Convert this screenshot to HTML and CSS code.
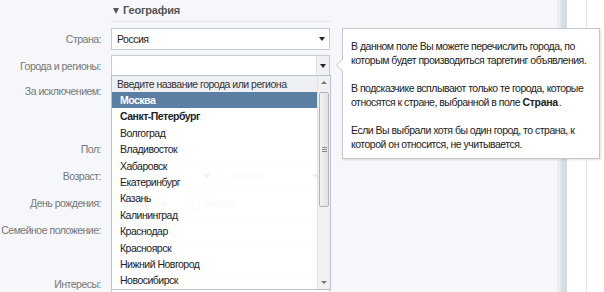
FILE: index.html
```html
<!DOCTYPE html>
<html lang="ru">
<head>
    <meta charset="UTF-8">
    <title>Таргетинг</title>
    <link rel="stylesheet" href="styles.css">
</head>
<body>
    <div class="page">
        <div class="panel">
            <div class="section-title"><span class="tri"></span>География</div>
            <div class="form">
                <div class="row row-country">
                    <label>Страна:</label>
                    <div class="select"><span>Россия</span><span class="arrow"></span></div>
                </div>
                <div class="row row-cities">
                    <label>Города и регионы:</label>
                    <div class="combo">
                        <span class="combo-btn"><span class="arrow"></span></span>
                        <div class="dropdown">
                            <div class="dd-list">
                                <div class="dd-hint">Введите название города или региона</div>
                                <div class="dd-item active">Москва</div>
                                <div class="dd-item bold">Санкт-Петербург</div>
                                <div class="dd-item">Волгоград</div>
                                <div class="dd-item">Владивосток</div>
                                <div class="dd-item">Хабаровск</div>
                                <div class="dd-item">Екатеринбург</div>
                                <div class="dd-item">Казань</div>
                                <div class="dd-item">Калининград</div>
                                <div class="dd-item">Краснодар</div>
                                <div class="dd-item">Красноярск</div>
                                <div class="dd-item">Нижний Новгород</div>
                                <div class="dd-item">Новосибирск</div>
                            </div>
                            <div class="dd-scroll">
                                <span class="sc-up"></span>
                                <span class="sc-thumb"><span class="grip"></span></span>
                                <span class="sc-down"></span>
                            </div>
                        </div>
                    </div>
                </div>
                <div class="row row-except">
                    <label>За исключением:</label>
                    <div class="input"></div>
                </div>
                <div class="row row-sex">
                    <label>Пол:</label>
                    <div class="radios"></div>
                </div>
                <div class="row row-age">
                    <label>Возраст:</label>
                    <div class="pair">
                        <div class="select small"><span></span><span class="arrow"></span></div>
                        <div class="select small"><span>– Любой</span><span class="arrow"></span></div>
                    </div>
                </div>
                <div class="row row-bday">
                    <label>День рождения:</label>
                    <div class="checks">
                        <span class="check"></span><span>Сегодня</span>
                        <span class="check"></span><span>Завтра</span>
                    </div>
                </div>
                <div class="row row-family">
                    <label>Семейное положение:</label>
                    <div class="select"><span></span><span class="arrow"></span></div>
                </div>
                <div class="row row-interests">
                    <label>Интересы:</label>
                    <div class="input"></div>
                </div>
            </div>

            <div class="tip">
                <p>В данном поле Вы можете перечислить города, по которым будет производиться таргетинг объявления.</p>
                <p>В подсказчике всплывают только те города, которые относятся к стране, выбранной в поле <b>Страна</b>.</p>
                <p>Если Вы выбрали хотя бы один город, то страна, к которой он относится, не учитывается.</p>
            </div>
        </div>
        <div class="bar"></div>
        <div class="side"></div>
    </div>
</body>
</html>
```

FILE: styles.css
```css
*{
    margin: 0;
    padding: 0;
    box-sizing: border-box;
}
body{
    width: 604px;
    height: 292px;
    overflow: hidden;
    font-family: "Liberation Sans", Arial, sans-serif;
    font-size: 10.5px;
    letter-spacing: -0.5px;
    color: #222;
    background: #fff;
}
.page{
    display: flex;
    height: 292px;
}
.panel{
    position: relative;
    width: 557px;
    background: #f6f7fa;
}
.bar{
    width: 10px;
    background: linear-gradient(to right, #e9edf2 0, #e9edf2 3px, #d5dce4 5px, #d5dce4 100%);
}
.side{
    flex: 1;
    background: #fff;
    border-right: 1px solid #e4e6e9;
    margin-right: 17px;
}

/* section header */
.section-title{
    margin-left: 111px;
    width: 220px;
    height: 22px;
    padding-left: 2px;
    border-bottom: 1px solid #e3e6ea;
    font-weight: bold;
    font-size: 11px;
    letter-spacing: -0.2px;
    color: #555;
    line-height: 21px;
    display: flex;
    align-items: center;
    gap: 4px;
}
.tri{
    width: 0;
    height: 0;
    border-left: 3.5px solid transparent;
    border-right: 3.5px solid transparent;
    border-top: 6px solid #555;
    margin-top: 1px;
}

/* form */
.form{
    padding-top: 6px;
}
.row{
    display: grid;
    grid-template-columns: 102px 219px;
    column-gap: 9px;
    align-items: center;
}
.row label{
    text-align: right;
    color: #777;
    white-space: nowrap;
    padding-right: 1px;
}
.row-country{ height: 22px; }
.row-cities{ height: 21px; margin-top: 5px; }
.row-except{ height: 22px; margin-top: 4px; }
.row-sex{ height: 18px; margin-top: 38px; }
.row-age{ height: 22px; margin-top: 7px; }
.row-bday{ height: 18px; margin-top: 7px; }
.row-family{ height: 22px; margin-top: 7px; }
.row-interests{ height: 18px; margin-top: 34px; }

.select, .input, .combo{
    height: 100%;
    background: #fff;
    border: 1px solid #c6ccd3;
    display: flex;
    align-items: center;
    justify-content: space-between;
    padding: 0 4px 0 5px;
    color: #222;
}
.arrow{
    width: 0;
    height: 0;
    border-left: 3.5px solid transparent;
    border-right: 3.5px solid transparent;
    border-top: 4px solid #222;
}
.pair{
    display: flex;
    gap: 4px;
    height: 100%;
}
.select.small{
    width: 104px;
    color: #999;
}
.checks{
    display: flex;
    align-items: center;
    gap: 5px;
    color: #999;
}
.check{
    width: 13px;
    height: 13px;
    border: 1px solid #bbb;
    background: #fff;
    margin-left: 16px;
}
.check:first-child{
    margin-left: 0;
}

/* city combobox */
.combo{
    position: relative;
    justify-content: flex-end;
    padding: 0;
}
.combo-btn{
    width: 13px;
    height: 100%;
    background: #eef0f3;
    border-left: 1px solid #dde1e6;
    display: flex;
    align-items: center;
    justify-content: center;
}
.dropdown{
    position: absolute;
    top: 19px;
    left: -1px;
    width: 220px;
    height: 215px;
    display: flex;
    border: 1px solid #b9c1ca;
    background: rgba(255, 255, 255, 0.93);
    z-index: 2;
}
.dd-list{
    flex: 1;
}
.dd-hint{
    height: 16px;
    line-height: 16px;
    padding-left: 5px;
    background: #eef0f3;
    color: #333;
    white-space: nowrap;
}
.dd-item{
    height: 16.4px;
    line-height: 16.4px;
    padding-left: 8px;
    color: #222;
}
.dd-item.bold{
    font-weight: bold;
}
.dd-item.active{
    background: #5b7ea3;
    color: #fff;
    font-weight: bold;
}
.dd-scroll{
    width: 13px;
    background: #f1f1f1;
    border-left: 1px solid #e2e2e2;
    display: flex;
    flex-direction: column;
    align-items: center;
}
.sc-up, .sc-down{
    width: 0;
    height: 0;
    border-left: 3px solid transparent;
    border-right: 3px solid transparent;
}
.sc-up{
    border-bottom: 3px solid #777;
    margin-top: 5px;
}
.sc-down{
    border-top: 3px solid #777;
    margin-top: auto;
    margin-bottom: 5px;
}
.sc-thumb{
    width: 10px;
    height: 115px;
    margin-top: 8px;
    border: 1px solid #b4b4b4;
    border-radius: 2px;
    background: linear-gradient(to right, #f3f3f3, #e2e2e2);
    display: flex;
    align-items: center;
    justify-content: center;
}
.grip{
    width: 5px;
    height: 5px;
    border-top: 1px solid #888;
    border-bottom: 1px solid #888;
    position: relative;
}
.grip::after{
    content: "";
    position: absolute;
    left: 0;
    right: 0;
    top: 1px;
    border-top: 1px solid #888;
}

/* hint tooltip */
.tip{
    position: absolute;
    left: 342px;
    top: 28px;
    width: 258px;
    height: 131px;
    background: #fff;
    border: 1px solid #c3c7cc;
    box-shadow: 1px 1px 2px rgba(0, 0, 0, 0.12);
    padding: 10px 4px 0 8px;
    line-height: 14px;
    color: #222;
}
.tip p{
    margin-bottom: 14px;
}
.tip b{
    letter-spacing: -0.3px;
    padding-right: 1px;
}
.tip::before, .tip::after{
    content: "";
    position: absolute;
    top: 30px;
    width: 0;
    height: 0;
    border-top: 6px solid transparent;
    border-bottom: 6px solid transparent;
}
.tip::before{
    left: -7px;
    border-right: 6px solid #c3c7cc;
}
.tip::after{
    left: -6px;
    border-right: 6px solid #fff;
}
```
